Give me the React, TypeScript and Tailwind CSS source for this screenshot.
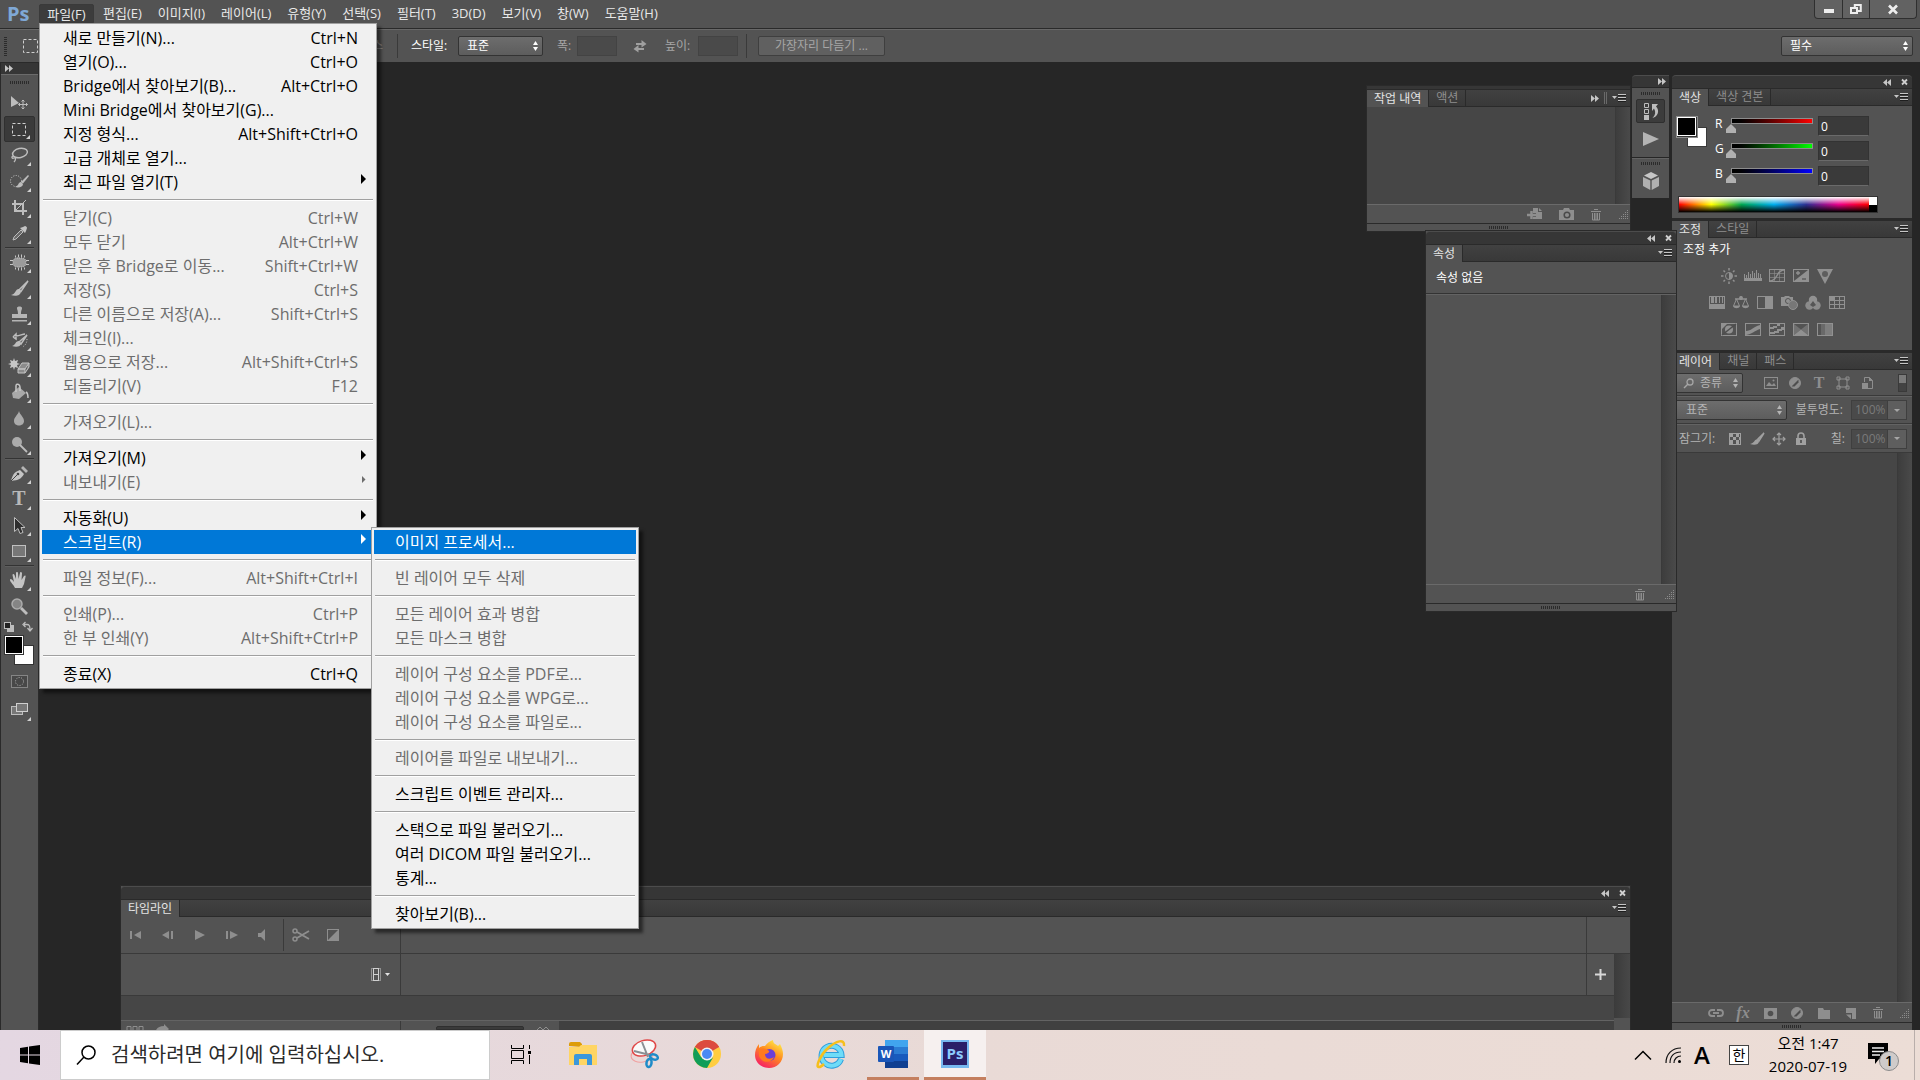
import React from 'react';
import clsx from 'clsx';

type MenuEntry =
  | { kind: 'sep' }
  | { kind: 'item'; label: string; keys?: string; disabled?: boolean; arrow?: boolean; sub?: MenuEntry[] };

const sep: MenuEntry = { kind: 'sep' };
const on = (label: string, keys?: string): MenuEntry => ({ kind: 'item', label, keys });
const off = (label: string, keys?: string): MenuEntry => ({ kind: 'item', label, keys, disabled: true });
const more = (label: string, disabled = false): MenuEntry => ({ kind: 'item', label, disabled, arrow: true });

const scriptMenu: MenuEntry[] = [
  on('이미지 프로세서...'),
  sep,
  off('빈 레이어 모두 삭제'),
  sep,
  off('모든 레이어 효과 병합'),
  off('모든 마스크 병합'),
  sep,
  off('레이어 구성 요소를 PDF로...'),
  off('레이어 구성 요소를 WPG로...'),
  off('레이어 구성 요소를 파일로...'),
  sep,
  off('레이어를 파일로 내보내기...'),
  sep,
  on('스크립트 이벤트 관리자...'),
  sep,
  on('스택으로 파일 불러오기...'),
  on('여러 DICOM 파일 불러오기...'),
  on('통계...'),
  sep,
  on('찾아보기(B)...'),
];

const fileMenu: MenuEntry[] = [
  on('새로 만들기(N)...', 'Ctrl+N'),
  on('열기(O)...', 'Ctrl+O'),
  on('Bridge에서 찾아보기(B)...', 'Alt+Ctrl+O'),
  on('Mini Bridge에서 찾아보기(G)...'),
  on('지정 형식...', 'Alt+Shift+Ctrl+O'),
  on('고급 개체로 열기...'),
  more('최근 파일 열기(T)'),
  sep,
  off('닫기(C)', 'Ctrl+W'),
  off('모두 닫기', 'Alt+Ctrl+W'),
  off('닫은 후 Bridge로 이동...', 'Shift+Ctrl+W'),
  off('저장(S)', 'Ctrl+S'),
  off('다른 이름으로 저장(A)...', 'Shift+Ctrl+S'),
  off('체크인(I)...'),
  off('웹용으로 저장...', 'Alt+Shift+Ctrl+S'),
  off('되돌리기(V)', 'F12'),
  sep,
  off('가져오기(L)...'),
  sep,
  more('가져오기(M)'),
  more('내보내기(E)', true),
  sep,
  more('자동화(U)'),
  { kind: 'item', label: '스크립트(R)', arrow: true, sub: scriptMenu },
  sep,
  off('파일 정보(F)...', 'Alt+Shift+Ctrl+I'),
  sep,
  off('인쇄(P)...', 'Ctrl+P'),
  off('한 부 인쇄(Y)', 'Alt+Shift+Ctrl+P'),
  sep,
  on('종료(X)', 'Ctrl+Q'),
];

const menuTitles = ['편집(E)', '이미지(I)', '레이어(L)', '유형(Y)', '선택(S)', '필터(T)', '3D(D)', '보기(V)', '창(W)', '도움말(H)'];

/* ---------- menus ---------- */

const MenuList: React.FC<{ items: MenuEntry[]; active: number; className: string }> = ({ items, active, className }) => (
  <ul className={clsx('absolute border border-[#a0a0a0] bg-[#f0f0f0] p-0.5 text-base/6 text-black shadow-[4px_4px_3px_rgba(0,0,0,0.5)]', className)}>
    {items.map((item, i) => {
      if (item.kind === 'sep') {
        return (
          <li key={i} className="flex h-3 flex-col px-px pt-[5px]">
            <div className="h-0.5 border-t border-[#a0a0a0] bg-white" />
          </li>
        );
      }
      const selected = i === active;
      return (
        <li key={i} className="relative">
          <button
            type="button"
            disabled={item.disabled}
            className={clsx(
              'flex h-6 w-full items-center justify-between whitespace-nowrap pr-4 pl-[21px] text-left',
              selected && 'bg-[#0078d7] text-white',
              item.disabled && 'text-[#6d6d6d]',
            )}
          >
            <span>{item.label}</span>
            {item.keys && <span>{item.keys}</span>}
          </button>
          {item.arrow && (
            <svg className={clsx('absolute top-1 right-2 fill-current', selected ? 'text-white' : item.disabled ? 'text-[#6d6d6d]' : 'text-black')} width="5" height="10" viewBox="0 0 5 10">
              <path d={item.disabled ? 'M1 2l3.5 3.5L1 9z' : 'M0 0l5 5-5 5z'} />
            </svg>
          )}
          {item.sub && <MenuList items={item.sub} active={0} className="-top-[3px] left-[329px] w-[268px]" />}
        </li>
      );
    })}
  </ul>
);

/* ---------- small shared pieces ---------- */

const Icon: React.FC<{ w?: number; h?: number; className?: string; children: React.ReactNode }> = ({ w = 16, h = 16, className, children }) => (
  <svg width={w} height={h} viewBox={`0 0 ${w} ${h}`} className={clsx('shrink-0 overflow-visible', className)} fill="none" stroke="none">
    {children}
  </svg>
);

const Gripper: React.FC<{ className?: string }> = ({ className }) => (
  <div className={clsx('h-[3px] w-5 bg-[repeating-linear-gradient(90deg,#2b2b2b_0_1px,transparent_1px_2px)]', className)} />
);

const Chevrons: React.FC<{ flip?: boolean }> = ({ flip }) => (
  <Icon w={8} h={7} className={flip ? 'rotate-180' : ''}>
    <path d="M0 0l4 3.5L0 7zM4 0l4 3.5L4 7z" fill="#c6c6c6" />
  </Icon>
);

const CloseMark = () => (
  <Icon w={7} h={6}>
    <path d="M1 0.5l5 5M6 0.5l-5 5" stroke="#d0d0d0" strokeWidth="1.8" />
  </Icon>
);

const PanelMenu = () => (
  <button type="button" aria-label="패널 메뉴" className="mr-1">
    <Icon w={14} h={9}>
      <path d="M0 2h5L2.5 5z" fill="#c6c6c6" />
      <path d="M6 .5h8M6 3.5h8M6 6.5h8" stroke="#c6c6c6" />
      <path d="M6 1.5h8M6 4.5h8M6 7.5h8" stroke="#1f1f1f" />
    </Icon>
  </button>
);

const UpDown: React.FC<{ className?: string }> = ({ className }) => (
  <Icon w={5} h={10} className={clsx('pointer-events-none absolute', className)}>
    <path d="M0 4l2.5-4L5 4zM0 6l2.500 4L5 6z" fill="currentColor" />
  </Icon>
);

const Dropdown: React.FC<{ label: string; value: string; className: string; pad?: string; children?: React.ReactNode }> = ({ label, value, className, pad = 'pl-2', children }) => (
  <div className={clsx('relative flex h-5 items-center rounded-xs border border-[#333] bg-linear-to-b from-[#6d6d6d] to-[#5d5d5d]', className)}>
    {children}
    <select aria-label={label} className={clsx('h-full w-full appearance-none bg-transparent text-xs/4 outline-none', pad)}>
      <option>{value}</option>
    </select>
    <UpDown className="right-1" />
  </div>
);

const WindowStrip = () => (
  <div className="flex h-[13px] items-center justify-end gap-2.5 rounded-t-sm border-t border-[#4c4c4c] bg-[#363636] pr-1">
    <Chevrons flip />
    <CloseMark />
  </div>
);

const TabBar: React.FC<{ tabs: string[]; children?: React.ReactNode }> = ({ tabs, children }) => (
  <div className="flex h-[18px] items-stretch border-t border-[#2a2a2a] bg-linear-to-b from-[#414141] to-[#383838] text-xs/4">
    {tabs.map((t, i) => (
      <button
        key={t}
        type="button"
        className={clsx('shrink-0 border-r border-[#2a2a2a] px-[7px]', i === 0 ? 'bg-[#535353] text-[#e4e4e4]' : 'border-b text-[#8e8e8e]')}
      >
        {t}
      </button>
    ))}
    <div className="flex flex-1 items-center justify-end gap-1 border-b border-[#2a2a2a]">
      {children}
      <PanelMenu />
    </div>
  </div>
);

const Trash = () => (
  <Icon w={12} h={13}>
    <path d="M4 1.500h4M1 3.500h10" stroke="currentColor" />
    <path d="M2.500 5v7h7V5M4.500 5v7M6 5v7M7.500 5v7" stroke="currentColor" />
  </Icon>
);

const Corner = () => (
  <Icon w={10} h={10}>
    <path d="M8 1.500h1M6 3.500h1M8 3.500h1M4 5.500h1M6 5.500h1M8 5.500h1M2 7.500h1M4 7.500h1M6 7.500h1M8 7.500h1M0 9.500h1M2 9.500h1M4 9.500h1M6 9.500h1M8 9.500h1" stroke="#8c8c8c" />
  </Icon>
);

const FootGrip = () => (
  <div className="flex h-2 items-center justify-center border-t border-[#2a2a2a] bg-[#535353]">
    <Gripper />
  </div>
);

const ScrollTrack = () => <div className="w-[15px] shrink-0 border-l border-[#3a3a3a] bg-linear-to-r from-[#3d3d3d] to-[#4a4a4a]" />;

/* ---------- toolbar ---------- */

const tools: { name: string; art: React.ReactNode; lineAfter?: boolean; noFly?: boolean }[] = [
  { name: '이동', noFly: true, art: <><path d="M2 2l8 7-8 4z" fill="#bdbdbd" /><path d="M14 6v9M9.500 10.500h9M12.500 7.500L14 6l1.500 1.500M12.500 13.500L14 15l1.500-1.500M11 9l-1.500 1.500L11 12M17 9l1.500 1.500L17 12" stroke="#bdbdbd" /></> },
  { name: '선택 윤곽', art: <rect x="3.500" y="3.500" width="13" height="12" stroke="#cfcfcf" strokeDasharray="3 2" /> },
  { name: '올가미', art: <><ellipse cx="11" cy="7" rx="7.500" ry="4.500" transform="rotate(-12 11 7)" stroke="#bdbdbd" strokeWidth="1.500" /><path d="M4 10c-2 1-1 3 1 2s2 2 0 4" stroke="#bdbdbd" strokeWidth="1.300" /></> },
  { name: '빠른 선택', art: <><circle cx="7" cy="9" r="5.500" stroke="#cfcfcf" strokeDasharray="1 1.500" /><path d="M19 3l-7 7 2 1.500L20 4z" fill="#bdbdbd" /><path d="M12 10c-3 0-2 4-6 5 4 1 8 0 8-3z" fill="#bdbdbd" /></> },
  { name: '자르기', art: <><path d="M6 2v11h12M3 6h11v11" stroke="#bdbdbd" strokeWidth="2" /><path d="M7 12l10-10" stroke="#bdbdbd" /></> },
  { name: '스포이드', lineAfter: true, art: <><path d="M4 16l1-3 7-7 2 2-7 7z" fill="#6a6a6a" stroke="#bdbdbd" /><path d="M11 4l5 5 1-2 1-3c0-1-1-2-2-2l-2 1z" fill="#c4c4c4" /></> },
  { name: '복구 브러시', art: <><rect x="4" y="5" width="13" height="9" rx="4" fill="#9b9b9b" /><path d="M6.500 2.500v2M9.500 1.500v3M12.500 1.500v3M15.500 2.500v2M6.500 14.500v2M9.500 14.500v3M12.500 14.500v3M15.500 14.500v2M1 7.500h3M1 11.500h3M17 7.500h3M17 11.500h3" stroke="#c6c6c6" /><rect x="4" y="5" width="13" height="9" rx="4" stroke="#c6c6c6" strokeDasharray="1 1" /></> },
  { name: '브러시', art: <><path d="M19 2l-9 9 2 1.500z" stroke="#bdbdbd" strokeWidth="1.500" /><path d="M10 10c-4 0-3 5-8 6 4 1.500 10 1 10-4z" fill="#bdbdbd" /></> },
  { name: '도장', art: <path d="M8 3c0-2 5-2 5 0s-1 2-1 6h6v4H3V9h6c0-4-1-4-1-6zM3 15h15v1.500H3z" fill="#b4b4b4" /> },
  { name: '작업 내역 브러시', art: <><path d="M18 4l-8 7 2 2z" stroke="#bdbdbd" strokeWidth="1.500" /><path d="M10 10c-4 0-3 4-7 5 4 1.500 9 1 9-3z" fill="#bdbdbd" /><path d="M4 6l3-3v2c4 0 6-2 9-2M4 6l3 2V6" stroke="#bdbdbd" strokeWidth="1.500" /><path d="M18 8c0 4-2 7-5 8" stroke="#bdbdbd" strokeDasharray="1 1.500" /></> },
  { name: '지우개', art: <><path d="M9 12l4-6h7l-4 6zM9 12v4h7v-4zM16 16l4-6V6" fill="#8b8b8b" stroke="#c4c4c4" /><path d="M5 1l1 3 3-1-1 3 3 1-3 1 1 3-3-1-1 3-1-3-3 1 1-3-3-1 3-1-1-3 3 1z" fill="#c6c6c6" /></> },
  { name: '페인트 통', art: <><path d="M3 10l7-6 7 6-7 6-6-1z" fill="#a9a9a9" /><path d="M7 9V3c0-3 4-2 4 1v4M17 9c2 1 2 3 2 6" stroke="#c6c6c6" strokeWidth="1.500" /></> },
  { name: '흐림 효과', art: <path d="M10 2c1 4 5 6 5 10 0 6-10 6-10 0 0-4 4-6 5-10z" fill="#aaa" /> },
  { name: '닷지', lineAfter: true, art: <><circle cx="8" cy="7" r="5" fill="#ababab" /><path d="M11 10l7 7" stroke="#bdbdbd" strokeWidth="1.800" /></> },
  { name: '펜', art: <><path d="M2 17c2-8 4-9 9-11l4 4c-3 5-5 6-13 7z" fill="#c4c4c4" /><path d="M12 4l2-2 5 5-2 2z" fill="#b4b4b4" /><path d="M2 17l7-7" stroke="#444" /><circle cx="9" cy="10" r="1.300" fill="#444" /></> },
  { name: '문자', art: <text x="10" y="15" textAnchor="middle" fontFamily="Liberation Serif" fontSize="20" fontWeight="bold" fill="#b8b8b8">T</text> },
  { name: '패스 선택', art: <path d="M5.500 1.500v14l3.500-3 2 5 3-1-2-5h4z" fill="#2e2e2e" stroke="#bdbdbd" /> },
  { name: '사각형', lineAfter: true, art: <rect x="3.500" y="3.500" width="13" height="11" fill="#777" stroke="#c0c0c0" /> },
  { name: '손', art: <path d="M6 17c-1-3-5-6-5-8s2-1 4 2L3.500 4c0-1.500 1.500-1.500 2 0L7 8V2c0-1.500 2-1.500 2 0l.5 6L11 2c0-1.500 2-1 2 .5L12.500 9 15 5c1-1 2-.5 1.500 1L15 13l-2 4z" fill="#c4c4c4" /> },
  { name: '돋보기', noFly: true, art: <><circle cx="8" cy="7" r="5" fill="#858585" stroke="#ababab" strokeWidth="1.500" /><path d="M12 11l6 6" stroke="#bdbdbd" strokeWidth="2.800" /></> },
];

const Toolbar = () => (
  <aside className="flex w-[39px] shrink-0 flex-col border-x border-[#2a2a2a] bg-[#535353]">
    <div className="flex h-[13px] items-center border-y border-b-[#6b6b6b] border-t-[#2a2a2a] bg-[#363636] pl-1">
      <Chevrons />
    </div>
    <div className="flex h-[15px] items-center justify-center">
      <Gripper />
    </div>
    {tools.map((t, i) => (
      <React.Fragment key={t.name}>
        <button
          type="button"
          aria-label={t.name}
          className={clsx('relative mx-[3px] flex h-[26px] w-[31px] shrink-0 items-center justify-center rounded-xs pr-px', i === 1 && 'border border-[#303030] bg-[#3a3a3a]')}
        >
          <Icon w={20} h={18}>{t.art}</Icon>
          {!t.noFly && (
            <svg width="4" height="4" className="absolute right-1 bottom-0.5"><path d="M4 0v4H0z" fill="#d0d0d0" /></svg>
          )}
        </button>
        {t.lineAfter && <div className="mx-1 my-px h-px shrink-0 bg-[#333] shadow-[0_1px_0_#5e5e5e]" />}
      </React.Fragment>
    ))}
    <div className="flex h-4 shrink-0 items-center justify-between pr-[5px] pl-[3px]">
      <Icon w={10} h={10}><rect x="3" y="3" width="7" height="7" fill="#bdbdbd" /><rect x=".5" y=".5" width="6" height="6" fill="#222" stroke="#bdbdbd" /></Icon>
      <Icon w={11} h={10}><path d="M2 2.500h3c2 0 3 1 3 5M3.500 0L1 2.500 3.500 5M5.500 6L8 9l2.500-3" stroke="#bdbdbd" strokeWidth="1.300" /></Icon>
    </div>
    <svg width="31" height="32" className="mx-[3px] shrink-0">
      <rect x="10.500" y="10.500" width="19" height="19" fill="#fff" stroke="#333" />
      <rect x=".5" y=".5" width="19" height="19" fill="#222" stroke="#333" />
      <rect x="1.500" y="1.500" width="17" height="17" fill="#000" stroke="#fff" />
    </svg>
    <button type="button" aria-label="빠른 마스크" className="flex h-7 shrink-0 items-center justify-center pr-px">
      <Icon w={17} h={13}><rect x=".5" y=".5" width="16" height="12" fill="#484848" stroke="#858585" /><circle cx="8.500" cy="6.500" r="4" stroke="#b8b8b8" strokeDasharray="1 1.500" /></Icon>
    </button>
    <button type="button" aria-label="화면 모드" className="relative flex h-7 shrink-0 items-center justify-center pr-px">
      <Icon w={17} h={14}><rect x=".5" y="4.500" width="11" height="8" fill="#777" stroke="#bdbdbd" /><rect x="5.500" y="1.500" width="11" height="8" fill="#777" stroke="#cfcfcf" /></Icon>
      <svg width="4" height="4" className="absolute right-[7px] bottom-0.5"><path d="M4 0v4H0z" fill="#d0d0d0" /></svg>
    </button>
  </aside>
);

/* ---------- top bars ---------- */

const MenuBar = () => (
  <header className="relative z-30 flex h-[29px] items-start justify-between border-b border-[#2a2a2a] bg-[#535353]">
    <nav className="flex items-start text-[13px]/[18px] text-[#e8e8e8]">
      <span className="w-[39px] pl-[7px] text-xl/7 font-bold text-[#7fa8d6]">Ps</span>
      <div className="relative mt-1 mr-px">
        <button type="button" className="h-[19px] w-[55px] rounded-t-xs border border-[#3a3a3a] bg-[#3c3c3c]">파일(F)</button>
        <MenuList items={fileMenu} active={23} className="top-[19px] left-0 w-[338px]" />
      </div>
      {menuTitles.map((m) => (
        <button key={m} type="button" className="mt-1 px-2">{m}</button>
      ))}
    </nav>
    <div className="mr-[3px] flex h-[19px] divide-x divide-[#2f2f2f] rounded-b-sm border border-t-0 border-[#2f2f2f] bg-[#626262]">
      <button type="button" aria-label="최소화" className="flex w-7 items-center justify-center"><Icon w={10} h={8}><path d="M0 4h10v4H0z" fill="#ededed" /></Icon></button>
      <button type="button" aria-label="복원" className="flex w-[27px] items-center justify-center"><Icon w={12} h={10}><path d="M4.800 5V1h6v6h-3M1 4h6v5H1z" stroke="#ededed" strokeWidth="2" /></Icon></button>
      <button type="button" aria-label="닫기" className="flex w-[46px] items-center justify-center"><Icon w={10} h={9}><path d="M1 .5l8 8M9 .5l-8 8" stroke="#ededed" strokeWidth="2.600" /></Icon></button>
    </div>
  </header>
);

const OptionsBar = () => (
  <div className="flex h-[33px] items-center border-t border-[#686868] bg-[#535353] pb-px pl-1 text-xs/4 text-[#a6a6a6]">
    <div className="h-5 w-[3px] bg-[repeating-linear-gradient(0deg,#2b2b2b_0_1px,transparent_1px_2px)]" />
    <Icon w={15} h={14} className="ml-4"><rect x=".5" y=".5" width="14" height="13" stroke="#cfcfcf" strokeDasharray="3 2" /></Icon>
    <span className="w-[345px] text-right text-[#8e8e8e]">스</span>
    <div className="mr-[13px] ml-3.5 h-6 w-px bg-[#3a3a3a]" />
    <span className="w-[47px] text-white">스타일:</span>
    <Dropdown label="스타일" value="표준" className="w-[85px] text-white" />
    <label htmlFor="opt-w" className="w-[34px] pl-3.5">폭:</label>
    <input id="opt-w" disabled className="h-5 w-10 border border-[#434343] bg-[#4a4a4a]" />
    <Icon w={14} h={14} className="mr-[18px] ml-4"><path d="M3 5h7M4 10h7" stroke="#a0a0a0" strokeWidth="2" /><path d="M8.500 1l5 4-5 3.500zM5.500 6l-5 4 5 3.500z" fill="#a0a0a0" /></Icon>
    <label htmlFor="opt-h" className="w-[33px]">높이:</label>
    <input id="opt-h" disabled className="h-5 w-10 border border-[#434343] bg-[#4a4a4a]" />
    <div className="mr-[11px] ml-2 h-6 w-px bg-[#3a3a3a]" />
    <button type="button" disabled className="h-5 w-[127px] rounded-xs border border-[#3f3f3f] bg-[#606060]">가장자리 다듬기 ...</button>
    <div className="flex-1" />
    <Dropdown label="작업 영역" value="필수" className="mr-[7px] w-[132px] text-white" />
  </div>
);

/* ---------- floating panels ---------- */

const HistoryPanel = () => (
  <section className="absolute top-[23px] right-px w-[265px] border border-[#2a2a2a] bg-[#535353]">
    <div className="h-[3px] bg-[#363636]" />
    <TabBar tabs={['작업 내역', '액션']}>
      <Chevrons />
      <div className="mx-px h-3 w-[3px] border-x border-[#6a6a6a]" />
    </TabBar>
    <div className="flex h-[97px] bg-[#464646]">
      <div className="flex-1" />
      <ScrollTrack />
    </div>
    <div className="flex h-[19px] items-center justify-end border-t border-[#6a6a6a] pr-px text-[#8e8e8e]">
      <Icon w={15} h={12}><path d="M6 0h5v4h4v7H6V9h3V5H6z" fill="currentColor" /><path d="M12 0l3 3h-3z" fill="currentColor" /><path d="M4.500 3v8M0 7h9" stroke="currentColor" strokeWidth="2.500" /></Icon>
      <Icon w={15} h={12} className="mr-4 ml-[17px]"><path d="M0 2h4l1-2h5l1 2h4v10H0z" fill="currentColor" /><circle cx="8" cy="7" r="2.800" stroke="#4a4a4a" strokeWidth="1.500" /></Icon>
      <Trash />
      <div className="w-[17px]" />
      <Corner />
    </div>
    <FootGrip />
  </section>
);

const PropertiesPanel = () => (
  <section className="absolute top-[168px] -right-[45px] z-10 w-[252px] border border-[#2a2a2a] bg-[#535353]">
    <WindowStrip />
    <TabBar tabs={['속성']} />
    <p className="h-8 border-b border-[#333] pt-2 pl-2.5 text-xs/4 text-white">속성 없음</p>
    <div className="flex h-[290px] border-t border-[#636363]">
      <div className="flex-1" />
      <ScrollTrack />
    </div>
    <div className="flex h-[19px] items-center justify-end border-t border-[#6a6a6a] pr-px text-[#8e8e8e]">
      <Trash />
      <div className="w-[19px]" />
      <Corner />
    </div>
    <FootGrip />
  </section>
);

const transport = [
  { name: '첫 프레임', d: 'M2 3h2v8H2zM13 3v8L6 7z' },
  { name: '이전 프레임', d: 'M9 3v8L2 7zM11 3h2v8h-2z' },
  { name: '재생', d: 'M3 2v10l10-5z' },
  { name: '다음 프레임', d: 'M2 3h2v8H2zM6 3l8 4-8 4z' },
  { name: '오디오', d: 'M2 5h3l4-4v12L5 9H2z' },
];

const TimelinePanel = () => (
  <section className="absolute right-px bottom-0 left-[81px] border-x border-t border-[#2a2a2a] bg-[#535353]">
    <WindowStrip />
    <TabBar tabs={['타임라인']} />
    <div className="flex h-[37px] border-b border-[#3a3a3a]">
      <div className="flex w-[280px] items-center border-r border-[#3a3a3a] text-[#8e8e8e]">
        <div className="flex w-[162px] items-center gap-[17px] pl-[7px]">
          {transport.map((t) => (
            <button key={t.name} type="button" aria-label={t.name}>
              <Icon w={15} h={14}><path d={t.d} fill="currentColor" /></Icon>
            </button>
          ))}
        </div>
        <div className="h-8 w-px bg-[#3a3a3a]" />
        <Icon w={17} h={14} className="ml-2"><circle cx="3" cy="3" r="2" stroke="currentColor" strokeWidth="1.500" /><circle cx="3" cy="11" r="2" stroke="currentColor" strokeWidth="1.500" /><path d="M5 4l12 7M5 10l12-7" stroke="currentColor" strokeWidth="1.800" /></Icon>
        <Icon w={12} h={12} className="ml-[18px]"><rect x=".5" y=".5" width="11" height="11" stroke="currentColor" /><path d="M11 1v10H1z" fill="currentColor" /></Icon>
      </div>
      <div className="flex-1" />
      <div className="w-11 border-l border-[#3a3a3a]" />
    </div>
    <div className="flex">
      <div className="flex flex-1 flex-col">
        <div className="flex h-[42px] border-b border-[#3a3a3a]">
          <div className="flex w-[280px] items-center justify-end border-r border-[#3a3a3a] pr-2.5">
            <Icon w={19} h={13}><rect x=".5" y=".5" width="9" height="12" stroke="#cfcfcf" strokeDasharray="1 1" /><path d="M2.500 0v13M7.500 0v13M2 6.500h6M2 .5h6M2 12.500h6" stroke="#cfcfcf" /><path d="M14 5h5l-2.500 3z" fill="#e4e4e4" /></Icon>
          </div>
          <div className="flex-1" />
          <button type="button" aria-label="미디어 추가" className="flex w-7 items-center justify-center border-l border-[#3a3a3a]">
            <Icon w={11} h={11}><path d="M5.500 0v11M0 5.500h11" stroke="#d8d8d8" strokeWidth="2" /></Icon>
          </button>
        </div>
        <div className="h-6 bg-[#464646]" />
        <div className="flex h-2.5 border-t border-[#636363] bg-[#404040]">
          <div className="flex w-[280px] items-end gap-3 overflow-hidden border-r border-[#3a3a3a] bg-[#535353] pl-1.5 text-[#8e8e8e]">
            <Icon w={17} h={4}><path d="M0 4V.5h4V4M6 4V.5h4V4M12 4V.5h4V4" stroke="currentColor" /></Icon>
            <Icon w={14} h={6}><path d="M0 6c2-3 4-4 8-4V0l5 5-1 1z" fill="currentColor" /></Icon>
          </div>
          <div className="flex w-[158px] items-end justify-between bg-[#535353] pr-2.5 pl-[35px]">
            <div className="h-1 w-[88px] rounded-t-xs border border-[#2f2f2f] bg-[#3a3a3a]" />
            <Icon w={12} h={4}><path d="M0 4l3-3 3 3 3-3 3 3" stroke="#8e8e8e" /></Icon>
          </div>
        </div>
      </div>
      <div className="flex w-4 flex-col">
        <div className="flex-1 bg-linear-to-r from-[#3b3b3b] to-[#484848]" />
        <div className="h-3 bg-[#535353]" />
      </div>
    </div>
  </section>
);

/* ---------- docked panels ---------- */

const IconDock = () => (
  <div className="flex w-[37px] flex-col">
    <div className="flex h-3 items-center justify-end rounded-tl-sm border-t border-[#4c4c4c] bg-[#363636] pr-[3px]"><Chevrons /></div>
    <div className="mt-px flex h-[69px] flex-col items-center bg-[#535353] pt-1">
      <Gripper />
      <button type="button" aria-label="작업 내역" className="mt-1 flex h-6 w-[29px] items-center justify-center rounded-xs border border-[#2f2f2f] bg-[#3c3c3c]">
        <Icon w={16} h={17}><path d="M1.500.5h4v4h-4zM1.500 6.500h4v4h-4z" stroke="#bdbdbd" /><path d="M1 12h5v5H1z" fill="#bdbdbd" /><path d="M9 1h6l-2 2.500c4 4 2 10-3.500 11.500 3-3 3.500-6 1.500-9.500L9 8z" fill="#bdbdbd" /></Icon>
      </button>
      <button type="button" aria-label="액션" className="mt-[9px]"><Icon w={16} h={14}><path d="M0 0l16 7-16 7z" fill="#b4b4b4" /></Icon></button>
    </div>
    <div className="mt-px flex h-10 flex-col items-center border-t border-[#636363] bg-[#535353] pt-[3px]">
      <Gripper />
      <button type="button" aria-label="3D" className="mt-[7px]"><Icon w={16} h={18}><path d="M8 0l7 3.500L8 7 1 3.500z" fill="#c6c6c6" /><path d="M0 5l7.300 3.500V18L0 14zM16 5L8.700 8.500V18l7.300-4z" fill="#b0b0b0" /></Icon></button>
    </div>
  </div>
);

const channels = [
  { id: 'R', track: 'to-[#ff0000]' },
  { id: 'G', track: 'to-[#00ff00]' },
  { id: 'B', track: 'to-[#0000ff]' },
];

const ColorPanel = () => (
  <section className="bg-[#535353]">
    <TabBar tabs={['색상', '색상 견본']} />
    <div className="flex h-[90px] pt-2.5 pl-1">
      <svg width="31" height="32" className="shrink-0">
        <rect x="11.500" y="11.500" width="19" height="19" fill="#fff" stroke="#3a3a3a" />
        <rect x=".5" y=".5" width="21" height="21" fill="#333" stroke="#8c8c8c" />
        <rect x="1.500" y="1.500" width="18" height="18" fill="#000" stroke="#fff" />
      </svg>
      <div className="ml-2 flex flex-col gap-[5px]">
        {channels.map((c) => (
          <div key={c.id} className="flex h-5 items-start">
            <label htmlFor={`ch-${c.id}`} className="w-[11px] text-xs/4 text-white">{c.id}</label>
            <div className="w-[92px]">
              <div className={clsx('mx-[5px] mt-0.5 h-1.5 border border-[#8c8c8c] bg-linear-to-r from-black', c.track)} />
              <input
                id={`ch-${c.id}`}
                type="range"
                min={0}
                max={255}
                defaultValue={0}
                className="block h-2.5 w-full appearance-none bg-transparent [&::-webkit-slider-thumb]:h-2.5 [&::-webkit-slider-thumb]:w-2.5 [&::-webkit-slider-thumb]:appearance-none [&::-webkit-slider-thumb]:bg-[#b0b0b0] [&::-webkit-slider-thumb]:[clip-path:polygon(50%_0,100%_50%,100%_90%,0_90%,0_50%)]"
              />
            </div>
            <input aria-label={`${c.id} 값`} defaultValue="0" className="h-5 w-[51px] border border-[#333] border-b-[#6a6a6a] bg-[#3a3a3a] pl-0.5 text-xs/4 text-white" />
          </div>
        ))}
      </div>
    </div>
    <div className="ml-1.5 flex h-[17px] w-[200px] border border-[#333]">
      <div className="flex-1 bg-[linear-gradient(180deg,#fff,transparent_50%,#000),linear-gradient(90deg,#f00,#ff0_17%,#00a651_33%,#00aeef_50%,#2e3192_67%,#ec008c_84%,#f00)]" />
      <div className="w-2 bg-linear-to-b from-white from-50% to-black to-50%" />
    </div>
    <div className="h-[5px]" />
  </section>
);

const frame = <rect x=".5" y="1.500" width="15" height="12" stroke="currentColor" />;
const adjustRows = [
  [
    <><circle cx="8" cy="8" r="3.500" stroke="currentColor" /><path d="M8 4.500v7a3.500 3.500 0 000-7" fill="currentColor" /><path d="M8 0v2.500M8 13.500V16M0 8h2.500M13.500 8H16M2.500 2.500L4 4M12 12l1.500 1.500M13.500 2.500L12 4M4 12l-1.500 1.500" stroke="currentColor" strokeWidth="1.500" /></>,
    <><path d="M-1 10h18v3H-1z" fill="currentColor" /><path d="M-.5 10V6M1.500 10V7M3.500 10V4M5.500 10V6M7.500 10V3M9.500 10V5M11.500 10V2M13.500 10V5M15.500 10V6" stroke="currentColor" /></>,
    <>{frame}<path d="M5.500 2v11M10.500 2v11M1 5.500h14M1 9.500h14" stroke="currentColor" opacity=".6" /><path d="M1 13c8 0 6-11 14-11" stroke="currentColor" strokeWidth="1.500" /></>,
    <>{frame}<path d="M15 2v11H1z" fill="currentColor" /><path d="M3 5h4M5 3v4" stroke="currentColor" strokeWidth="1.300" /><path d="M9 11h4" stroke="#444" /></>,
    <><path d="M0 1h16L8 16z" fill="currentColor" /><circle cx="8" cy="6" r="3" fill="#5e5e5e" /></>,
  ],
  [
    <>{frame}<path d="M1 9h14v4H1zM2 2h3v6H2zM6 2h2v6H6zM10 2h1v6h-1zM13 2h1v6h-1z" fill="currentColor" /></>,
    <><path d="M2 4h12M8 1v4" stroke="currentColor" strokeWidth="1.500" /><circle cx="8" cy="3" r="2" fill="currentColor" /><path d="M3.500 4L.5 11h6zM12.500 4l-3 7h6z" stroke="currentColor" /><path d="M0 11h7c-1 3-6 3-7 0zM9 11h7c-1 3-6 3-7 0z" fill="currentColor" /></>,
    <>{frame}<path d="M8 2h7v11H8z" fill="currentColor" /></>,
    <><path d="M0 2h3l1-1h4l1 1h3v9H0z" fill="currentColor" /><circle cx="7" cy="6" r="2.500" stroke="#555" /><circle cx="12" cy="10" r="4.500" fill="#777" stroke="currentColor" /></>,
    <><circle cx="8" cy="5" r="4.200" fill="currentColor" /><circle cx="4.500" cy="10.500" r="4.200" fill="currentColor" opacity=".9" /><circle cx="11.500" cy="10.500" r="4.200" fill="currentColor" opacity=".9" /><path d="M8 6l3 4-3 2-3-2z" fill="#555" /></>,
    <>{frame}<path d="M5.500 2v11M10.500 2v11M1 5.500h14M1 9.500h14" stroke="currentColor" /><path d="M1 2h4v3H1z" fill="currentColor" /></>,
  ],
  [
    <>{frame}<circle cx="8" cy="7.500" r="4" fill="currentColor" /><path d="M1 13L15 2" stroke="#4e4e4e" strokeWidth="1.500" /><path d="M1 2h5l-5 5z" fill="currentColor" /></>,
    <>{frame}<path d="M1 9c5 0 7-4 14-6v4c-6 2-8 5-14 6z" fill="currentColor" /></>,
    <>{frame}<path d="M1 7V5h3V4h4V2h3v2H8v2H5v1zM1 12v-2h4V9h3V7h4V5h3v3h-2v1h-3v2H6v1z" fill="currentColor" /></>,
    <>{frame}<path d="M1 2l7 5.500L1 13zM15 2L8 7.500l7 5.500z" fill="currentColor" opacity=".5" /><path d="M1 13l7-5.500L15 13z" fill="currentColor" /></>,
    <>{frame}<path d="M8 2h7v11H8z" fill="currentColor" opacity=".7" /><path d="M4 2h4v11H4z" fill="currentColor" opacity=".35" /></>,
  ],
];

const AdjustPanel = () => (
  <section className="border-t-2 border-[#2a2a2a] bg-[#535353]">
    <TabBar tabs={['조정', '스타일']} />
    <p className="pt-0.5 pb-0.5 pl-[11px] text-xs/5 text-white">조정 추가</p>
    <div className="pb-[7px] text-[#919191]">
      {adjustRows.map((row, r) => (
        <div key={r} className={clsx('flex h-[27px] items-center', row.length === 6 ? 'pl-[33px]' : 'pl-[45px]')}>
          {row.map((art, i) => (
            <button key={i} type="button" aria-label={`조정 ${r + 1}-${i + 1}`} className="flex w-6 justify-center"><Icon>{art}</Icon></button>
          ))}
        </div>
      ))}
    </div>
  </section>
);

const PercentField: React.FC<{ id: string }> = ({ id }) => (
  <div className="mr-[5px] flex h-5 w-14 border border-[#3f3f3f] bg-[#4a4a4a]">
    <input id={id} disabled defaultValue="100%" className="w-9 border-r border-[#3f3f3f] pl-[3px] text-xs/4 text-[#7a7a7a]" />
    <button type="button" aria-label="값 선택" className="flex flex-1 items-center justify-center bg-[#5e5e5e]"><Icon w={6} h={3}><path d="M0 0h6L3 3z" fill="#a6a6a6" /></Icon></button>
  </div>
);

const noEntry = <><circle cx="8" cy="8" r="5.500" fill="currentColor" /><path d="M4.500 11.500l7-7v3l-4 4z" fill="#4e4e4e" /><circle cx="8" cy="8" r="5.500" stroke="currentColor" /></>;

const filterIcons = [
  <><rect x="1.500" y="2.500" width="13" height="11" stroke="currentColor" /><path d="M3 11l3-4 3 3 2-2 2 3z" fill="currentColor" /><circle cx="10.500" cy="5.500" r="1" fill="currentColor" /></>,
  noEntry,
  <text x="8" y="13" textAnchor="middle" fontFamily="Liberation Serif" fontSize="16" fontWeight="bold" fill="currentColor">T</text>,
  <><rect x="4" y="4" width="8" height="8" stroke="currentColor" /><path d="M2 2h3v3H2zM11 2h3v3h-3zM2 11h3v3H2zM11 11h3v3h-3z" stroke="currentColor" /></>,
  <><path d="M5.500 7V2.500h5l3 3v8H9" stroke="currentColor" /><path d="M3 8h6v6H3zM10 2v4h4z" fill="currentColor" /></>,
];

const lockIcons = [
  <><rect x="2.500" y="2.500" width="11" height="11" stroke="currentColor" /><path d="M3 3h3v3H3zM9 3h3v3H9zM6 6h3v3H6zM3 9h3v4H3zM9 9h3v4H9zM12 6h2v3h-2z" fill="currentColor" /></>,
  <><path d="M15 2l-6 6 1 2z" stroke="currentColor" strokeWidth="1.500" /><path d="M9 8c-4 0-3 4-8 5 4 1.500 9 1 9-3z" fill="currentColor" /></>,
  <path d="M8 2v12M2 8h12M6 4l2-2 2 2M6 12l2 2 2-2M4 6L2 8l2 2M12 6l2 2-2 2" stroke="currentColor" strokeWidth="1.200" />,
  <><path d="M3 7h10v7H3z" fill="currentColor" /><path d="M5 7V5c0-4 6-4 6 0v2" stroke="currentColor" strokeWidth="1.600" /><path d="M8 9v3" stroke="#444" strokeWidth="1.500" /></>,
];

const footIcons = [
  <path d="M7 5H4a3 3 0 000 6h3M9 5h3a3 3 0 010 6H9M5 8h6" stroke="currentColor" strokeWidth="1.800" />,
  <text x="8" y="13" textAnchor="middle" fontFamily="Liberation Serif" fontSize="16" fontStyle="italic" fontWeight="bold" fill="currentColor">fx</text>,
  <><path d="M2 3h13v11H2z" fill="currentColor" /><circle cx="8.500" cy="8.500" r="2.800" fill="#505050" /></>,
  noEntry,
  <path d="M2 3h5l1 2h6v9H2z" fill="currentColor" />,
  <path d="M3 3h10v11H9V8H3zM3 9.500h5V14z" fill="currentColor" />,
];

const LayersPanel = () => (
  <section className="flex min-h-0 flex-1 flex-col border-t-2 border-[#2a2a2a] bg-[#535353] text-xs/4 text-[#b4b4b4]">
    <TabBar tabs={['레이어', '채널', '패스']} />
    <div className="flex h-[26px] shrink-0 items-center border-b border-[#3a3a3a]">
      <Dropdown label="레이어 필터" value="종류" className="w-[71px]" pad="pl-1.5">
        <Icon w={10} h={10} className="ml-[11px]"><circle cx="6" cy="4" r="3" stroke="#a6a6a6" strokeWidth="1.300" /><path d="M4 6L0 10" stroke="#a6a6a6" strokeWidth="1.500" /></Icon>
      </Dropdown>
      <div className="ml-5 flex gap-2 text-[#8e8e8e]">{filterIcons.map((a, i) => <button key={i} type="button" aria-label={`필터 ${i + 1}`}><Icon>{a}</Icon></button>)}</div>
      <div className="ml-auto mr-[5px] h-[18px] w-[9px] border border-[#3a3a3a] bg-linear-to-b from-[#7a7a7a] from-50% to-[#434343] to-50%" />
    </div>
    <div className="flex h-7 shrink-0 items-center justify-between border-t border-b border-t-[#636363] border-b-[#3a3a3a]">
      <Dropdown label="혼합 모드" value="표준" className="w-[115px]" pad="pl-[13px]" />
      <div className="flex items-center gap-2"><label htmlFor="opacity">불투명도:</label><PercentField id="opacity" /></div>
    </div>
    <div className="flex h-[29px] shrink-0 items-center justify-between border-t border-b border-t-[#636363] border-b-[#3a3a3a] pl-[7px]">
      <div className="flex items-center gap-1.5 text-[#a0a0a0]">
        <span className="w-[42px] text-[#b4b4b4]">잠그기:</span>
        {lockIcons.map((a, i) => <button key={i} type="button" aria-label={`잠그기 ${i + 1}`}><Icon>{a}</Icon></button>)}
      </div>
      <div className="flex items-center gap-1.5"><label htmlFor="fill">칠:</label><PercentField id="fill" /></div>
    </div>
    <div className="flex min-h-0 flex-1 bg-[#464646]">
      <div className="flex-1" />
      <ScrollTrack />
    </div>
    <div className="flex h-5 shrink-0 items-center justify-end border-t border-[#6a6a6a] pr-0.5 text-[#8e8e8e]">
      {footIcons.map((a, i) => <button key={i} type="button" aria-label={`레이어 ${i + 1}`} className="mr-[11px]"><Icon>{a}</Icon></button>)}
      <button type="button" aria-label="삭제" className="mr-4 ml-0.5"><Trash /></button>
      <Corner />
    </div>
    <FootGrip />
  </section>
);

/* ---------- windows taskbar ---------- */

const TaskView = () => (
  <Icon w={20} h={19}>
    <path d="M.5 0v3.500h12V0M.5 19v-3.500h12V19M.5 5.500h12v8H.5zM18.500 0v4M18.500 10v9" stroke="#000" />
    <path d="M17 6h3v3h-3z" fill="#000" />
  </Icon>
);

const Explorer = () => (
  <Icon w={28} h={24}>
    <path d="M0 4V2a2 2 0 012-2h9l2 2v3z" fill="#dd9c08" />
    <path d="M0 5h10l2-2h16v20H0z" fill="#ffd564" />
    <path d="M5 23V14a2 2 0 012-2h14a2 2 0 012 2v9h-5v-6h-8v6z" fill="#3c98dc" />
  </Icon>
);

const Snip = () => (
  <Icon w={30} h={30}>
    <ellipse cx="12" cy="16" rx="11" ry="7" fill="#ead9d9" stroke="#f0a0a0" transform="rotate(-10 12 16)" />
    <ellipse cx="14" cy="9" rx="12" ry="7.500" fill="#fafafa" stroke="#e04848" strokeWidth="1.500" transform="rotate(-18 14 9)" />
    <path d="M12 3l6 15M4 12l16 4" stroke="#8a8f94" strokeWidth="2" />
    <ellipse cx="24" cy="18" rx="4" ry="2.500" stroke="#1f8bc8" strokeWidth="2.500" transform="rotate(20 24 18)" />
    <ellipse cx="19" cy="24" rx="2.500" ry="4" stroke="#1f8bc8" strokeWidth="2.500" transform="rotate(10 19 24)" />
  </Icon>
);

const Chrome = () => (
  <Icon w={28} h={28}>
    <circle cx="14" cy="14" r="14" fill="#ffcd40" />
    <path d="M14 14L1.900 7A14 14 0 0126.100 7z" fill="#dc4b3e" />
    <path d="M1.900 7A14 14 0 0014 28l6-10.500L14 20 8 17z" fill="#109d58" />
    <path d="M1.900 7H26.100A14 14 0 0014 0 14 14 0 001.900 7z" fill="#dc4b3e" />
    <circle cx="14" cy="14" r="6.500" fill="#f1f1f1" />
    <circle cx="14" cy="14" r="5" fill="#4a89f4" />
  </Icon>
);

const Firefox = () => (
  <Icon w={28} h={28}>
    <defs>
      <linearGradient id="fx" x1="0.800" y1="0" x2="0.200" y2="1">
        <stop offset="0" stopColor="#fff04a" />
        <stop offset=".45" stopColor="#ff8a1e" />
        <stop offset="1" stopColor="#f5156c" />
      </linearGradient>
    </defs>
    <path d="M14 28C6 28 0 22 0 15c0-4 1-7 4-11v4c2-2 4-2 6-2 2-3 5-5 8-6 0 4 3 4 5 6l2-2c2 4 3 7 3 10 0 8-6 14-14 14z" fill="url(#fx)" />
    <circle cx="14.500" cy="15" r="6" fill="#6b3fd6" />
    <path d="M4 10c4-3 8-1 10 1 1 1-1 3-4 3 0 5 5 6 9 3-2 6-12 7-15-1z" fill="#ff7a1e" />
  </Icon>
);

const InternetExplorer = () => (
  <Icon w={30} h={28}>
    <path d="M25 19a10 10 0 11.500-4H8" stroke="#2f9fdc" strokeWidth="6" />
    <path d="M25 19a10 10 0 11.500-4H8" stroke="#6fdcf8" strokeWidth="4" />
    <path d="M28 6c1-8-8-5-16 2S-1 28 3 27c2 0 4-2 5-3" stroke="#f6bf1c" strokeWidth="2.500" />
  </Icon>
);

const Word = () => (
  <Icon w={30} h={28}>
    <path d="M7 0h23v7H7z" fill="#41a5ee" />
    <path d="M7 7h23v7H7z" fill="#2b7cd3" />
    <path d="M7 14h23v7H7z" fill="#185abd" />
    <path d="M7 21h23v7H7z" fill="#103f91" />
    <rect y="6" width="16" height="16" rx="1" fill="#1a56b8" />
    <text x="8" y="18" textAnchor="middle" fontFamily="Open Sans" fontSize="11" fontWeight="bold" fill="#fff">W</text>
  </Icon>
);

const Photoshop = () => (
  <Icon w={28} h={28}>
    <rect width="28" height="28" fill="#77b8ef" />
    <rect x="2" y="2" width="24" height="23" fill="#2a1f68" />
    <text x="14" y="19" textAnchor="middle" fontFamily="Open Sans" fontSize="15" fontWeight="bold" fill="#8ccafc">Ps</text>
  </Icon>
);

const apps = [
  { name: '작업 보기', icon: <TaskView /> },
  { name: '파일 탐색기', icon: <Explorer /> },
  { name: '캡처 도구', icon: <Snip /> },
  { name: 'Chrome', icon: <Chrome /> },
  { name: 'Firefox', icon: <Firefox /> },
  { name: 'Internet Explorer', icon: <InternetExplorer /> },
  { name: 'Word', icon: <Word />, open: true },
  { name: 'Photoshop', icon: <Photoshop />, open: true, focused: true },
];

const Taskbar = () => (
  <footer className="relative z-20 flex h-[50px] shrink-0 items-stretch bg-linear-to-r from-[#e4d7e2] via-[#e9dad6] to-[#ecddd6] text-black">
    <button type="button" aria-label="시작" className="flex w-[60px] items-center justify-center">
      <Icon w={20} h={20}><path d="M0 3l8-1.200V9.500H0zM9 1.600L20 0v9.500H9zM0 10.500h8v7.700L0 17zM9 10.500h11V20L9 18.400z" fill="#000" /></Icon>
    </button>
    <label className="flex w-[430px] items-center border border-[#ccc] bg-white pl-[15px]">
      <Icon w={20} h={20}><circle cx="12.500" cy="7.500" r="6.500" stroke="#000" strokeWidth="1.500" /><path d="M8 12L1 19.500" stroke="#000" strokeWidth="1.500" /></Icon>
      <input aria-label="검색" placeholder="검색하려면 여기에 입력하십시오." className="ml-[15px] flex-1 text-xl/7 outline-none placeholder:text-[#2b2b2b]" />
    </label>
    {apps.map((a) => (
      <button
        key={a.name}
        type="button"
        aria-label={a.name}
        className={clsx('relative flex w-[62px] items-center justify-center pb-0.5', a.focused && 'bg-[#f6f0ef]')}
      >
        {a.icon}
        {a.open && <span className={clsx('absolute bottom-0 h-[3px] bg-[#c47f5f]', a.focused ? 'inset-x-0' : 'inset-x-[5px]')} />}
      </button>
    ))}
    <div className="flex-1" />
    <div className="flex items-center">
      <Icon w={18} h={10}><path d="M1 9.500l8-8 8 8" stroke="#000" strokeWidth="1.500" /></Icon>
      <Icon w={16} h={16} className="ml-[13px]"><path d="M1 16C1 7 7 1 16 1M5 16C5 9 9 5 16 5M9 16c0-4 3-7 7-7" stroke="#111" strokeWidth="1.200" /><circle cx="14.500" cy="14.500" r="1.500" fill="#000" /></Icon>
      <span className="ml-3 w-[18px] text-center text-2xl/6 font-semibold">A</span>
      <span className="ml-[18px] h-5 w-5 border border-[#444] bg-white text-center text-sm/[18px]">한</span>
      <div className="ml-[19px] w-20 text-center text-[15px]/[23px] whitespace-nowrap">
        <div>오전 1:47</div>
        <div>2020-07-19</div>
      </div>
      <button type="button" aria-label="알림 1개" className="relative ml-5 h-8 w-[31px]">
        <Icon w={20} h={21} className="absolute top-1 left-0"><path d="M0 0h20v16h-9l-4 5v-5H0z" fill="#000" /><path d="M4 5h12M4 8.500h12M4 12h8" stroke="#eee" strokeWidth="1.300" /></Icon>
        <span className="absolute top-3 right-0 h-5 w-5 rounded-full border border-[#8c8c8c] bg-[#cfcbca] text-center text-sm/[18px] font-semibold">1</span>
      </button>
      <div className="mr-[5px] ml-[15px] h-[50px] w-px bg-[#b9aeab]" />
    </div>
  </footer>
);

export default function App() {
  return (
    <div className="flex h-screen flex-col overflow-hidden bg-[#262626] font-['Open_Sans','Noto_Sans_CJK_KR',sans-serif]">
      <MenuBar />
      <OptionsBar />
      <main className="flex min-h-0 flex-1">
        <Toolbar />
        <div className="relative flex-1">
          <HistoryPanel />
          <PropertiesPanel />
          <TimelinePanel />
        </div>
        <div className="flex gap-[3px] pt-[13px] pr-2">
          <IconDock />
          <div className="flex w-60 flex-col">
            <WindowStrip />
            <ColorPanel />
            <AdjustPanel />
            <LayersPanel />
          </div>
        </div>
      </main>
      <Taskbar />
    </div>
  );
}
